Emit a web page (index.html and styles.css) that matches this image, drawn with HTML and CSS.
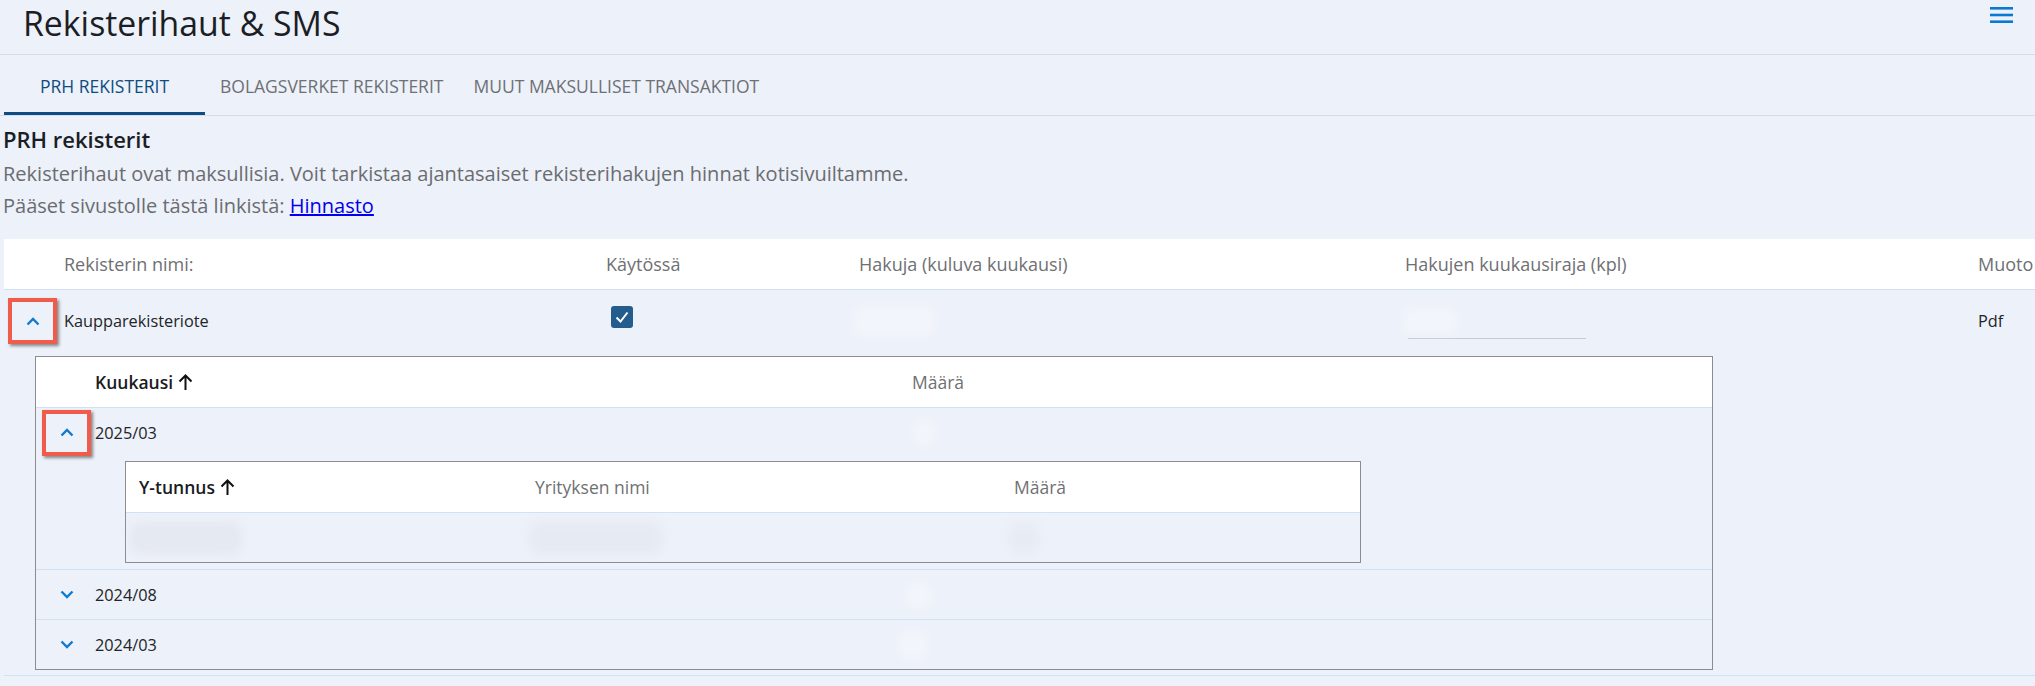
FILE: index.html
```html
<!DOCTYPE html>
<html lang="fi">
<head>
<meta charset="utf-8">
<title>Rekisterihaut &amp; SMS</title>
<link rel="stylesheet" href="styles.css">
</head>
<body>
<header class="topbar">
  <h1 class="title">Rekisterihaut &amp; SMS</h1>
  <button class="menu" aria-label="Valikko">
    <svg width="23" height="17" viewBox="0 0 23 17"><rect x="0" y="0" width="23" height="2.6" fill="#0b79d0"/><rect x="0" y="6.7" width="23" height="2.6" fill="#0b79d0"/><rect x="0" y="13.4" width="23" height="2.6" fill="#0b79d0"/></svg>
  </button>
</header>
<nav class="tabs">
  <div class="tab tab-active">PRH REKISTERIT</div>
  <div class="tab">BOLAGSVERKET REKISTERIT</div>
  <div class="tab">MUUT MAKSULLISET TRANSAKTIOT</div>
</nav>
<main class="content">
  <section class="intro">
    <h2 class="section-title">PRH rekisterit</h2>
    <p class="lead">Rekisterihaut ovat maksullisia. Voit tarkistaa ajantasaiset rekisterihakujen hinnat kotisivuiltamme.</p>
    <p class="lead">Pääset sivustolle tästä linkistä: <a class="link" href="#">Hinnasto</a></p>
  </section>
  <div class="table">
    <div class="main-grid main-head">
      <div></div>
      <div>Rekisterin nimi:</div>
      <div>Käytössä</div>
      <div>Hakuja (kuluva kuukausi)</div>
      <div>Hakujen kuukausiraja (kpl)</div>
      <div>Muoto</div>
    </div>
    <div class="main-item">
      <div class="main-grid main-row">
        <div class="cell"><button class="toggle toggle-main toggle-marked" aria-label="Sulje"><svg width="14" height="9" viewBox="0 0 14 9"><path d="M1.5 7.5 7 2l5.5 5.5" fill="none" stroke="#0f7ad2" stroke-width="2.4"/></svg></button></div>
        <div class="cell">Kaupparekisteriote</div>
        <div class="cell cell-check"><span class="checkbox"><svg width="22" height="22" viewBox="0 0 22 22"><path d="M5.5 11.5 9.5 15.5 16.5 6.5" fill="none" stroke="#fff" stroke-width="2"/></svg></span></div>
        <div class="cell"><span class="blur blur-hakuja"></span></div>
        <div class="cell"><div class="limit-input"><span class="blur blur-limit"></span></div></div>
        <div class="cell">Pdf</div>
      </div>
      <div class="main-expand">
        <div class="nested">
          <div class="nested-grid nested-head">
            <div></div>
            <div class="sort-head">Kuukausi <svg width="15" height="18" viewBox="0 0 15 18"><path d="M7.5 17V2.5M1.5 8.5l6-6 6 6" fill="none" stroke="#111" stroke-width="2"/></svg></div>
            <div class="muted">Määrä</div>
          </div>
          <div class="nested-item">
            <div class="nested-grid nested-row">
              <div class="cell"><button class="toggle toggle-nested toggle-marked" aria-label="Sulje"><svg width="14" height="9" viewBox="0 0 14 9"><path d="M1.5 7.5 7 2l5.5 5.5" fill="none" stroke="#0f7ad2" stroke-width="2.4"/></svg></button></div>
              <div class="cell">2025/03</div>
              <div class="cell"><span class="blur blur-n1"></span></div>
            </div>
            <div class="nested-expand">
              <div class="inner">
                <div class="inner-grid inner-head">
                  <div class="sort-head">Y-tunnus <svg width="15" height="18" viewBox="0 0 15 18"><path d="M7.5 17V2.5M1.5 8.5l6-6 6 6" fill="none" stroke="#111" stroke-width="2"/></svg></div>
                  <div class="muted">Yrityksen nimi</div>
                  <div class="muted">Määrä</div>
                </div>
                <div class="inner-grid inner-row">
                  <div class="cell"><span class="blur blur-i1"></span></div>
                  <div class="cell"><span class="blur blur-i2"></span></div>
                  <div class="cell"><span class="blur blur-i3"></span></div>
                </div>
              </div>
            </div>
          </div>
          <div class="nested-item">
            <div class="nested-grid nested-row">
              <div class="cell"><button class="toggle toggle-nested" aria-label="Avaa"><svg width="14" height="9" viewBox="0 0 14 9"><path d="M1.5 1.5 7 7l5.5-5.5" fill="none" stroke="#0f7ad2" stroke-width="2.4"/></svg></button></div>
              <div class="cell">2024/08</div>
              <div class="cell"><span class="blur blur-n2"></span></div>
            </div>
          </div>
          <div class="nested-item nested-item-last">
            <div class="nested-grid nested-row">
              <div class="cell"><button class="toggle toggle-nested" aria-label="Avaa"><svg width="14" height="9" viewBox="0 0 14 9"><path d="M1.5 1.5 7 7l5.5-5.5" fill="none" stroke="#0f7ad2" stroke-width="2.4"/></svg></button></div>
              <div class="cell">2024/03</div>
              <div class="cell"><span class="blur blur-n3"></span></div>
            </div>
          </div>
        </div>
      </div>
    </div>
  </div>
</main>
</body>
</html>
```
FILE: styles.css
```css
html, body {
  margin: 0;
  padding: 0;
}
body {
  background: #edf1f9;
  font-family: "Open Sans", "Noto Sans", sans-serif;
  color: #1c1f26;
  overflow: hidden;
}

/* Top bar */
.topbar {
  display: flex;
  justify-content: space-between;
  align-items: flex-start;
  height: 55px;
  box-sizing: border-box;
  border-bottom: 1px solid #d6dbe4;
}
.title {
  margin: 0;
  padding: 3px 0 0 23px;
  font-size: 33.8px;
  font-weight: 400;
  line-height: 40px;
  color: #1b1e25;
}
.menu {
  margin: 7px 22px 0 0;
  padding: 0;
  border: none;
  background: none;
  width: 23px;
  height: 17px;
  display: block;
}
.menu svg { display: block; }

/* Tabs */
.tabs {
  display: flex;
  height: 61px;
  box-sizing: border-box;
  border-bottom: 1px solid #d6dbe4;
  padding-left: 4px;
}
.tab {
  box-sizing: border-box;
  height: 60px;
  padding: 19px 15px 0;
  font-size: 17.5px;
  line-height: 24px;
  color: #6e7075;
  border-bottom: 3px solid transparent;
  white-space: nowrap;
}
.tab-active {
  min-width: 201px;
  text-align: center;
  color: #0f4c81;
  border-bottom-color: #0f4c81;
}

/* Intro */
.intro {
  padding-left: 3px;
}
.section-title {
  margin: 8px 0 4px;
  font-size: 22px;
  font-weight: 600;
  line-height: 30px;
  color: #1b1e25;
}
.lead {
  margin: 0;
  font-size: 20px;
  line-height: 32px;
  color: #6a6c70;
}
.link {
  color: #0000ee;
  text-decoration: underline;
}

/* Main table */
.table {
  margin-top: 17px;
  margin-left: 4px;
}
.main-grid {
  display: grid;
  grid-template-columns: 60px 542px 253px 546px 573px 1fr;
  align-items: center;
  white-space: nowrap;
}
.main-head {
  background: #ffffff;
  height: 51px;
  box-sizing: border-box;
  border-bottom: 1px solid #cfe1f3;
  font-size: 18px;
  line-height: 24px;
  color: #6f7073;
}
.main-row {
  height: 62px;
  font-size: 16.3px;
  line-height: 24px;
  color: #222428;
}
.cell {
  display: flex;
  align-items: center;
}
.cell-check {
  padding: 0 0 8px 5px;
}
.checkbox {
  width: 22px;
  height: 22px;
  border-radius: 3px;
  background: #245c8d;
  display: block;
}
.checkbox svg { display: block; }

.limit-input {
  width: 178px;
  height: 36px;
  margin-left: 3px;
  box-sizing: border-box;
  border-bottom: 1px solid #c6cbd4;
  display: flex;
  align-items: center;
}

.toggle {
  width: 49px;
  height: 46px;
  box-sizing: border-box;
  padding: 0;
  border: 4px solid transparent;
  background: transparent;
  display: flex;
  align-items: center;
  justify-content: center;
  cursor: pointer;
}
.toggle svg { display: block; }
.toggle-main { margin-left: 4px; }
.toggle-nested { margin-left: 6px; }
.toggle-marked {
  border-color: #f05b4c;
  box-shadow: 2px 2px 3px rgba(0, 0, 0, 0.45);
}

.main-expand {
  padding: 4px 0 5px 31px;
  border-bottom: 1px solid #cfe1f3;
}

/* Nested table */
.nested {
  width: 1678px;
  box-sizing: border-box;
  border: 1px solid #8c8d90;
}
.nested-grid {
  display: grid;
  grid-template-columns: 59px 817px 1fr;
  align-items: center;
  white-space: nowrap;
}
.nested-head {
  background: #ffffff;
  height: 51px;
  box-sizing: border-box;
  border-bottom: 1px solid #cfe1f3;
  font-size: 17.5px;
  line-height: 24px;
}
.nested-row {
  height: 49px;
  font-size: 16.3px;
  line-height: 24px;
  color: #222428;
}
.nested-item {
  border-bottom: 1px solid #cfe1f3;
}
.nested-item-last {
  border-bottom: none;
}
.sort-head {
  display: flex;
  align-items: center;
  gap: 5px;
  font-weight: 600;
  color: #1a1b1e;
}
.sort-head svg { display: block; }
.muted {
  color: #6f7073;
}
.nested-expand {
  padding: 4px 0 6px 89px;
}

/* Inner table */
.inner {
  width: 1236px;
  box-sizing: border-box;
  border: 1px solid #8c8d90;
}
.inner-grid {
  display: grid;
  grid-template-columns: 396px 479px 1fr;
  align-items: center;
  padding-left: 13px;
  white-space: nowrap;
}
.inner-head {
  background: #ffffff;
  height: 51px;
  box-sizing: border-box;
  border-bottom: 1px solid #cfe1f3;
  font-size: 17.5px;
  line-height: 24px;
}
.inner-row {
  height: 49px;
}

/* Redacted values */
.blur {
  display: block;
  border-radius: 10px;
  background: rgba(255, 255, 255, 0.3);
  filter: blur(5px);
}
.blur-hakuja { width: 82px; height: 32px; margin-left: -6px; }
.blur-limit { width: 56px; height: 28px; margin-left: -6px; }
.blur-n1 { width: 22px; height: 28px; margin-left: 1px; }
.blur-n2 { width: 26px; height: 28px; margin-left: -6px; }
.blur-n3 { width: 30px; height: 30px; margin-left: -14px; }
.blur-i1 { width: 112px; height: 32px; margin-left: -9px; background: rgba(214, 219, 230, 0.35); }
.blur-i2 { width: 132px; height: 32px; margin-left: -5px; background: rgba(214, 219, 230, 0.3); }
.blur-i3 { width: 28px; height: 30px; margin-left: -4px; background: rgba(214, 219, 230, 0.25); }
```
